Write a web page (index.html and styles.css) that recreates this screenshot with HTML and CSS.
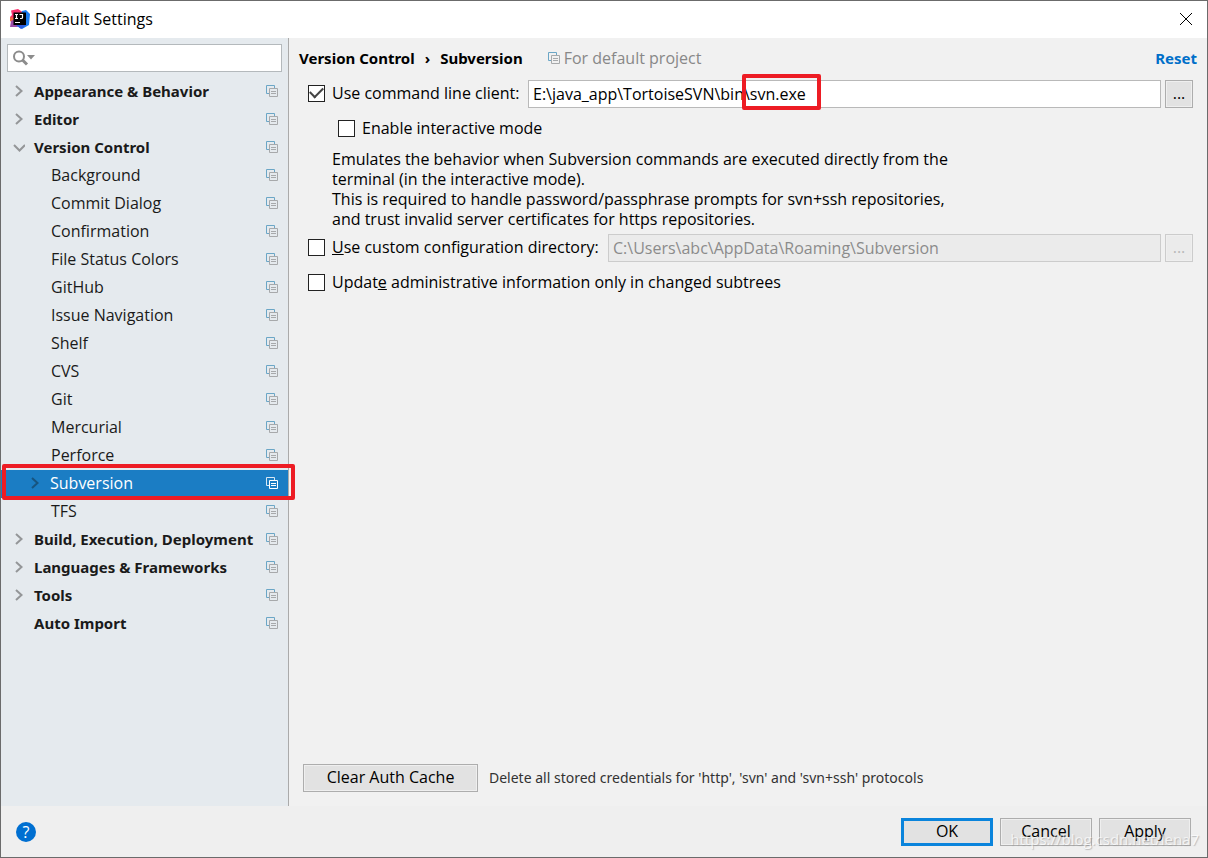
FILE: index.html
```
<!DOCTYPE html>
<html lang="en">
<head>
<meta charset="utf-8">
<title>Default Settings</title>
<link rel="stylesheet" href="styles.css">
</head>
<body>
<svg class="sprite" aria-hidden="true">
  <symbol id="copy" viewBox="0 0 12 12">
    <path class="copy-back" d="M3 8.500H.5V.5H8.500V3"/>
    <path class="copy-front" d="M3.500 3.500h8v8h-8zM5 6.500h5M5 8.500h5"/>
  </symbol>
  <symbol id="right" viewBox="0 0 12 12"><path d="M3 1l5.500 5L3 11"/></symbol>
  <symbol id="down" viewBox="0 0 12 12"><path d="M1 4l5.500 5.500L12 4"/></symbol>
</svg>
<div class="window">
  <header class="titlebar">
    <svg class="logo" viewBox="0 0 20 20" aria-hidden="true">
      <path fill="#f9316d" d="M1 1.500L8 0l6 4-4 10-9-2L0 8l2-2z"/>
      <path fill="#f26b45" d="M0 8l4 1v6l-4-3z"/>
      <path fill="#9a4ba8" d="M1 12l4-2 3 8-8 0z"/>
      <path fill="#1c7df0" d="M12 2l4-1 4 4-1 11-7 4-5-3z"/>
      <path fill="#2e5be0" d="M6 16h10l-5 4z"/>
      <path fill="#000" d="M3.500 3.500h12.500v12.500h-12.500z"/>
      <path fill="none" stroke="#fff" stroke-width="1.200" d="M5 5.500h3M6.500 5.500v4M5 9.500h3M9.500 5.500h3v3q0 1-1 1h-1.500M5 13.500h5"/>
    </svg>
    <h1 class="title">Default Settings</h1>
    <button class="close" type="button" aria-label="Close">
      <svg viewBox="0 0 12 12"><path d="M0 0l12 12M12 0L0 12"/></svg>
    </button>
  </header>
  <div class="content">
    <aside class="sidebar">
      <div class="search">
        <svg class="search-icon" viewBox="0 0 24 16" aria-hidden="true">
          <circle cx="7" cy="6.500" r="5"/><path class="handle" d="M10.500 10l4.500 4.500"/><path class="arrow" d="M15 5h8l-4 4.500z"/>
        </svg>
        <input class="search-input" type="text" aria-label="Search settings">
      </div>
      <nav class="tree" aria-label="Settings">
        <button class="row group" type="button"><svg class="chev"><use href="#right"/></svg><span class="name">Appearance &amp; Behavior</span><svg class="copy"><use href="#copy"/></svg></button>
        <button class="row group" type="button"><svg class="chev"><use href="#right"/></svg><span class="name">Editor</span><svg class="copy"><use href="#copy"/></svg></button>
        <button class="row group" type="button" aria-expanded="true"><svg class="chev"><use href="#down"/></svg><span class="name">Version Control</span><svg class="copy"><use href="#copy"/></svg></button>
        <button class="row child" type="button"><span class="name">Background</span><svg class="copy"><use href="#copy"/></svg></button>
        <button class="row child" type="button"><span class="name">Commit Dialog</span><svg class="copy"><use href="#copy"/></svg></button>
        <button class="row child" type="button"><span class="name">Confirmation</span><svg class="copy"><use href="#copy"/></svg></button>
        <button class="row child" type="button"><span class="name">File Status Colors</span><svg class="copy"><use href="#copy"/></svg></button>
        <button class="row child" type="button"><span class="name">GitHub</span><svg class="copy"><use href="#copy"/></svg></button>
        <button class="row child" type="button"><span class="name">Issue Navigation</span><svg class="copy"><use href="#copy"/></svg></button>
        <button class="row child" type="button"><span class="name">Shelf</span><svg class="copy"><use href="#copy"/></svg></button>
        <button class="row child" type="button"><span class="name">CVS</span><svg class="copy"><use href="#copy"/></svg></button>
        <button class="row child" type="button"><span class="name">Git</span><svg class="copy"><use href="#copy"/></svg></button>
        <button class="row child" type="button"><span class="name">Mercurial</span><svg class="copy"><use href="#copy"/></svg></button>
        <button class="row child" type="button"><span class="name">Perforce</span><svg class="copy"><use href="#copy"/></svg></button>
        <button class="row child selected" type="button" aria-current="page"><svg class="chev"><use href="#right"/></svg><span class="name">Subversion</span><svg class="copy"><use href="#copy"/></svg><span class="mark mark-row"></span></button>
        <button class="row child" type="button"><span class="name">TFS</span><svg class="copy"><use href="#copy"/></svg></button>
        <button class="row group" type="button"><svg class="chev"><use href="#right"/></svg><span class="name">Build, Execution, Deployment</span><svg class="copy"><use href="#copy"/></svg></button>
        <button class="row group" type="button"><svg class="chev"><use href="#right"/></svg><span class="name">Languages &amp; Frameworks</span><svg class="copy"><use href="#copy"/></svg></button>
        <button class="row group" type="button"><svg class="chev"><use href="#right"/></svg><span class="name">Tools</span><svg class="copy"><use href="#copy"/></svg></button>
        <button class="row group" type="button"><span class="chev"></span><span class="name">Auto Import</span><svg class="copy"><use href="#copy"/></svg></button>
      </nav>
    </aside>
    <main class="panel">
      <div class="heading">
        <h2 class="crumbs"><span>Version Control</span><span class="sep">›</span><span>Subversion</span></h2>
        <span class="scope"><svg class="copy"><use href="#copy"/></svg>For default project</span>
        <a class="reset" href="#">Reset</a>
      </div>
      <form class="options">
        <div class="line">
          <label class="option client"><input class="check" type="checkbox" checked>Use command line client:</label>
          <div class="field">
            <input class="text" type="text" value="E:\java_app\TortoiseSVN\bin\svn.exe" aria-label="Command line client path">
            <span class="mark mark-path"></span>
          </div>
          <button class="button browse" type="button">...</button>
        </div>
        <label class="option nested"><input class="check" type="checkbox">Enable interactive mode</label>
        <p class="hint">Emulates the behavior when Subversion commands are executed directly from the<br>terminal (in the interactive mode).<br>This is required to handle password/passphrase prompts for svn+ssh repositories,<br>and trust invalid server certificates for https repositories.</p>
        <div class="line">
          <label class="option directory"><input class="check" type="checkbox"><span><u>U</u>se custom configuration directory:</span></label>
          <div class="field">
            <input class="text" type="text" value="C:\Users\abc\AppData\Roaming\Subversion" aria-label="Configuration directory" disabled>
          </div>
          <button class="button browse" type="button" disabled>...</button>
        </div>
        <label class="option update"><input class="check" type="checkbox"><span>Updat<u>e</u> administrative information only in changed subtrees</span></label>
      </form>
      <div class="auth">
        <button class="button clear" type="button">Clear Auth Cache</button>
        <span class="note">Delete all stored credentials for 'http', 'svn' and 'svn+ssh' protocols</span>
      </div>
    </main>
  </div>
  <footer class="footer">
    <button class="help" type="button" aria-label="Help">?</button>
    <button class="button action primary" type="button">OK</button>
    <button class="button action" type="button">Cancel</button>
    <button class="button action" type="button">Apply</button>
    <span class="watermark">https://blog.csdn.net/lena7</span>
  </footer>
</div>
</body>
</html>
```
FILE: styles.css
```
* { box-sizing: border-box; }
body { margin: 0; font: 16px/20px "Open Sans", "Noto Sans", sans-serif; color: #000; }
button, input { font: inherit; color: inherit; }
button { margin: 0; padding: 0; border: 0; background: none; }
.sprite { position: absolute; width: 0; height: 0; }
.window { display: flex; flex-direction: column; min-height: 100vh; border: 1px solid #6b6b6b; background: #f1f1f1; }

.titlebar { display: flex; align-items: center; gap: 5px; height: 37px; padding: 0 15px 2px 9px; background: #fff; }
.logo { width: 20px; height: 20px; }
.title { flex: 1; margin: 0; font-size: 16px; font-weight: 400; }
.close { display: flex; }
.close svg { width: 12px; height: 12px; overflow: visible; fill: none; stroke: #000; }

.content { display: flex; flex: 1; }
.sidebar { --copy-back: #6ba6c6; --copy-front: #a7a9ab; flex: none; width: 288px; padding-top: 6px; border-right: 1px solid #aaa; background: #e5eaee; }
.search { display: flex; align-items: center; height: 28px; margin: 0 6px 6px; padding: 0 4px; border: 1px solid #b4b9bc; background: #fff; }
.search-icon { flex: none; width: 24px; height: 16px; fill: none; stroke: #8c8c8c; stroke-width: 2; }
.search-icon .handle { stroke-width: 3; }
.search-icon .arrow { fill: #8c8c8c; stroke: none; }
.search-input { flex: 1; min-width: 0; border: 0; outline: 0; background: none; }
.tree { display: flex; flex-direction: column; }
.row { position: relative; display: flex; align-items: center; height: 28px; padding: 0 10px 2px 12px; color: #1a1a1a; text-align: left; }
.name { flex: 1; white-space: nowrap; }
.group { font-family: "Noto Sans", "Open Sans", sans-serif; font-size: 15px; font-weight: 700; }
.child { padding-left: 50px; }
.chev { flex: none; width: 12px; height: 12px; margin-right: 9px; fill: none; stroke: #949698; stroke-width: 2; }
.copy { flex: none; width: 12px; height: 12px; fill: none; }
.copy-back { stroke: var(--copy-back, #6ba6c6); }
.copy-front { stroke: var(--copy-front, #a7a9ab); }
.selected { --copy-back: #d5e7f4; --copy-front: #fff; padding-left: 28px; background: #1b7dc4; color: #fff; }
.selected .chev { stroke: #17547f; }
.mark { position: absolute; border: 4px solid #ed1c24; border-radius: 2px; pointer-events: none; }
.mark-row { inset: -6px -7px -2px 1px; z-index: 1; }
.mark-path { top: -6px; left: 214px; width: 79px; height: 36px; }

.panel { flex: 1; display: flex; flex-direction: column; min-width: 0; padding: 10px 14px 14px; }
.heading { display: flex; align-items: center; margin: 0 -4px; }
.crumbs { display: flex; gap: 10px; margin: 0; font: 700 15px/20px "Noto Sans", "Open Sans", sans-serif; }
.scope { display: flex; align-items: center; gap: 4px; margin-left: 25px; color: #888; }
.reset { margin-left: auto; color: #006fc9; font: 700 15px/20px "Noto Sans", "Open Sans", sans-serif; text-decoration: none; }
.options { display: flex; flex-direction: column; padding: 12px 0 0 5px; }
.line { display: flex; align-items: center; gap: 4px; }
.option { display: flex; align-items: center; gap: 7px; padding-bottom: 2px; white-space: nowrap; }
.client { width: 216px; }
.directory { width: 296px; }
.nested { margin: 10px 0 9px 30px; }
.update { margin-top: 10px; }
.check { flex: none; display: grid; place-items: center; appearance: none; width: 17px; height: 17px; margin: 0; border: 1px solid #222; background: #fff; }
.check:checked::after { content: ""; width: 11px; height: 6px; border: solid #444; border-width: 0 0 2px 2px; transform: translateY(-2px) rotate(-45deg); }
.hint { margin: 0 0 5px 24px; }
.field { position: relative; flex: 1; display: flex; min-width: 0; }
.text { flex: 1; min-width: 0; height: 28px; padding: 0 4px; border: 1px solid #b9b9b9; background: #fff; }
.text:disabled { border-color: #ccc; background: #ebebeb; color: #8b8b8b; }
.button { height: 28px; padding-bottom: 2px; border: 1px solid #adadad; background: #e2e2e2; box-shadow: inset 0 0 0 1px #efefef; }
.browse { width: 28px; }
.browse:disabled { border-color: #ccc; background: #ebebeb; color: #b8b8b8; }
.auth { display: flex; align-items: center; gap: 11px; margin-top: auto; }
.clear { width: 175px; }
.note { color: #333; font: 14px/20px "Noto Sans", "Open Sans", sans-serif; }

.footer { position: relative; display: flex; align-items: center; gap: 7px; padding: 12px 16px 11px 15px; background: #efefef; }
.help { width: 20px; height: 20px; margin-right: auto; border-radius: 50%; background: #006fd1; color: #fff; }
.action { width: 92px; }
.primary { border: 3px solid #0a84dc; box-shadow: none; }
.watermark { position: absolute; right: 8px; bottom: 8px; color: #fff; opacity: .6; font-size: 15px; text-shadow: 1px 1px 1px #999; pointer-events: none; }
```
